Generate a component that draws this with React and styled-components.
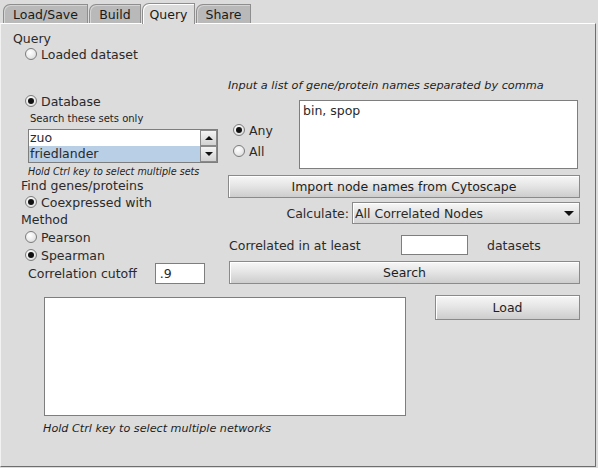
import React from 'react';
import styled, { createGlobalStyle } from 'styled-components';

const Global = createGlobalStyle`
  html, body { margin: 0; padding: 0; background: #dcdcdc; }
  body { font-family: "DejaVu Sans", "Liberation Sans", sans-serif; font-size: 12px; color: #2a2a2a; }
  * { box-sizing: border-box; }
`;

const Window = styled.div`
  width: 598px;
  height: 468px;
  padding-top: 3px;
  display: flex;
  flex-direction: column;
  background: #dcdcdc;
  overflow: hidden;
`;

const TabBar = styled.div`
  display: flex;
  align-items: flex-end;
  height: 20px;
  padding-left: 3px;
`;

const Tab = styled.div`
  width: ${p => p.$w}px;
  height: ${p => (p.$active ? 21 : 19)}px;
  margin-bottom: ${p => (p.$active ? -1 : 0)}px;
  margin-right: 1px;
  display: flex;
  align-items: center;
  justify-content: center;
  font-size: 12.5px;
  color: #1a1a1a;
  border: 1px solid #8e8e8e;
  border-bottom: none;
  border-top-left-radius: 7px;
  background: ${p => (p.$active ? '#dcdcdc' : '#b9b9b9')};
  box-shadow: inset 1px 1px 0 ${p => (p.$active ? '#ffffff' : '#d4d4d4')};
  position: relative;
  z-index: ${p => (p.$active ? 2 : 0)};
`;

const Panel = styled.div`
  flex: 1;
  margin-right: 2px;
  margin-bottom: 1px;
  border-top: 1px solid #ffffff;
  border-left: 1px solid #f2f2f2;
  border-right: 1px solid #6e6e6e;
  border-bottom: 1px solid #6e6e6e;
  padding: 7px 0 0 12px;
  display: flex;
  flex-direction: column;
`;

const TopGrid = styled.div`
  display: grid;
  grid-template-columns: 207px 352px;
  column-gap: 8px;
  align-items: start;
`;

const Column = styled.div`
  display: flex;
  flex-direction: column;
  padding-top: ${p => p.$pt || 0}px;
`;

const Label = styled.div`
  height: ${p => p.$h || 16}px;
  line-height: ${p => p.$h || 16}px;
  margin-top: ${p => p.$mt || 0}px;
  padding-left: ${p => p.$indent || 0}px;
  font-size: 12.5px;
  white-space: nowrap;
`;

const Hint = styled.div`
  height: ${p => p.$h || 14}px;
  line-height: ${p => p.$h || 14}px;
  margin-top: ${p => p.$mt || 0}px;
  padding-left: ${p => p.$indent || 0}px;
  font-size: ${p => p.$size || 11}px;
  font-style: ${p => (p.$italic ? 'italic' : 'normal')};
  white-space: nowrap;
  color: #1e1e1e;
`;

const RadioRow = styled.div`
  display: flex;
  align-items: center;
  gap: 4px;
  height: ${p => p.$h || 16}px;
  margin-top: ${p => p.$mt || 0}px;
  padding-left: ${p => (p.$indent === undefined ? 12 : p.$indent)}px;
  font-size: 12.5px;
  white-space: nowrap;
`;

const RadioCircle = styled.span`
  width: 12px;
  height: 12px;
  flex: none;
  border-radius: 50%;
  border: 1px solid #7c7c7c;
  background: radial-gradient(circle at 40% 35%, #ffffff 0%, #ececec 50%, #cfcfcf 100%);
  display: inline-flex;
  align-items: center;
  justify-content: center;
  &::after {
    content: '';
    width: 6px;
    height: 6px;
    border-radius: 50%;
    background: #101010;
    display: ${p => (p.$checked ? 'block' : 'none')};
  }
`;

const Radio = ({ checked, children, ...rest }) => (
  <RadioRow {...rest}>
    <RadioCircle $checked={checked} />
    <span>{children}</span>
  </RadioRow>
);

const SetList = styled.div`
  margin-top: ${p => p.$mt || 0}px;
  margin-left: 15px;
  width: 190px;
  height: 34px;
  border: 1px solid #7e7e7e;
  background: #fff;
  display: flex;
`;

const SetItems = styled.div`
  flex: 1;
  display: flex;
  flex-direction: column;
`;

const SetItem = styled.div`
  height: 16px;
  line-height: 16px;
  padding-left: 1px;
  font-size: 12.5px;
  background: ${p => (p.$selected ? '#b8cfe5' : '#ffffff')};
`;

const ScrollCol = styled.div`
  width: 17px;
  display: flex;
  flex-direction: column;
`;

const ScrollButton = styled.div`
  flex: 1;
  border: 1px solid #8a8a8a;
  background: linear-gradient(#f4f4f4, #d2d2d2);
  display: flex;
  align-items: center;
  justify-content: center;
  &::after {
    content: '';
    width: 0;
    height: 0;
    border-left: 4px solid transparent;
    border-right: 4px solid transparent;
    ${p => (p.$up ? 'border-bottom: 4px solid #111;' : 'border-top: 4px solid #111;')}
  }
`;

const CutoffRow = styled.div`
  display: flex;
  align-items: center;
  height: 21px;
  margin-top: ${p => p.$mt || 0}px;
  padding-left: 15px;
  font-size: 12.5px;
`;

const TextField = styled.div`
  width: ${p => p.$w}px;
  height: ${p => p.$h}px;
  margin-left: ${p => p.$ml || 0}px;
  border: 1px solid #7e7e7e;
  background: #fff;
  padding-left: 4px;
  line-height: ${p => p.$h - 2}px;
  font-size: 12.5px;
`;

const InputRow = styled.div`
  display: flex;
  margin-top: ${p => p.$mt || 0}px;
`;

const AnyAllGroup = styled.div`
  width: 71px;
  padding-top: 22px;
  display: flex;
  flex-direction: column;
`;

const NamesBox = styled.div`
  width: 279px;
  height: 69px;
  border: 1px solid #7e7e7e;
  background: #fff;
  padding: 2px 3px;
  font-size: 12.5px;
  line-height: 16px;
`;

const Button = styled.div`
  width: ${p => p.$w}px;
  height: ${p => p.$h || 23}px;
  margin-top: ${p => p.$mt || 0}px;
  margin-left: ${p => p.$ml || 0}px;
  border: 1px solid #8a8a8a;
  background: linear-gradient(#f7f7f7, #e6e6e6 45%, #cdcdcd);
  box-shadow: inset 1px 1px 0 #ffffff;
  display: flex;
  align-items: center;
  justify-content: center;
  font-size: 12.5px;
  color: #1e1e1e;
  flex: none;
`;

const CalcRow = styled.div`
  display: flex;
  align-items: center;
  justify-content: flex-end;
  gap: 3px;
  height: 22px;
  margin-top: ${p => p.$mt || 0}px;
  font-size: 12.5px;
`;

const Combo = styled.div`
  width: 228px;
  height: 22px;
  border: 1px solid #8a8a8a;
  background: linear-gradient(#f7f7f7, #e4e4e4 50%, #d4d4d4);
  box-shadow: inset 1px 1px 0 #ffffff;
  display: flex;
  align-items: center;
  justify-content: space-between;
  padding: 0 5px 0 2px;
  &::after {
    content: '';
    border-left: 5px solid transparent;
    border-right: 5px solid transparent;
    border-top: 5px solid #111;
  }
`;

const CorrRow = styled.div`
  display: flex;
  align-items: center;
  height: 20px;
  margin-top: ${p => p.$mt || 0}px;
  padding-left: 1px;
  font-size: 12.5px;
`;

const CorrText = styled.span`
  width: ${p => p.$w || 'auto'};
  margin-left: ${p => p.$ml || 0}px;
`;

const BottomRow = styled.div`
  display: flex;
  align-items: flex-start;
  margin-top: 11px;
  padding-left: 31px;
`;

const NetworkList = styled.div`
  width: 362px;
  height: 119px;
  margin-top: 2px;
  border: 1px solid #7e7e7e;
  background: #fff;
`;

export default function App() {
  return (
    <>
      <Global />
      <Window>
        <TabBar>
          <Tab $w={85}>Load/Save</Tab>
          <Tab $w={52}>Build</Tab>
          <Tab $w={53} $active>Query</Tab>
          <Tab $w={55}>Share</Tab>
        </TabBar>
        <Panel>
          <TopGrid>
            <Column>
              <Label>Query</Label>
              <Radio $h={14}>Loaded dataset</Radio>
              <Radio checked $mt={32}>Database</Radio>
              <Hint $mt={3} $indent={17} $size={10}>Search these sets only</Hint>
              <SetList $mt={3}>
                <SetItems>
                  <SetItem>zuo</SetItem>
                  <SetItem $selected>friedlander</SetItem>
                </SetItems>
                <ScrollCol>
                  <ScrollButton $up />
                  <ScrollButton />
                </ScrollCol>
              </SetList>
              <Hint $mt={2} $indent={15} $size={9.6} $italic>Hold Ctrl key to select multiple sets</Hint>
              <Label $h={14} $indent={8}>Find genes/proteins</Label>
              <Radio checked $mt={1}>Coexpressed with</Radio>
              <Label $mt={2} $indent={8}>Method</Label>
              <Radio $mt={1}>Pearson</Radio>
              <Radio checked $mt={2}>Spearman</Radio>
              <CutoffRow>
                <span>Correlation cutoff</span>
                <TextField $w={50} $h={21} $ml={18}>.9</TextField>
              </CutoffRow>
            </Column>
            <Column $pt={48}>
              <Hint $italic $size={11.3}>Input a list of gene/protein names separated by comma</Hint>
              <InputRow $mt={7}>
                <AnyAllGroup>
                  <Radio checked $indent={5}>Any</Radio>
                  <Radio $indent={5} $mt={5}>All</Radio>
                </AnyAllGroup>
                <NamesBox>bin, spop</NamesBox>
              </InputRow>
              <Button $w={352} $mt={6}>Import node names from Cytoscape</Button>
              <CalcRow $mt={4}>
                <span>Calculate:</span>
                <Combo>All Correlated Nodes</Combo>
              </CalcRow>
              <CorrRow $mt={11}>
                <CorrText $w="172px">Correlated in at least</CorrText>
                <TextField $w={67} $h={20} />
                <CorrText $ml={19}>datasets</CorrText>
              </CorrRow>
              <Button $w={351} $ml={1} $mt={6}>Search</Button>
            </Column>
          </TopGrid>
          <BottomRow>
            <NetworkList />
            <Button $w={145} $h={25} $ml={29}>Load</Button>
          </BottomRow>
          <Hint $mt={6} $indent={30} $size={11.2} $italic>Hold Ctrl key to select multiple networks</Hint>
        </Panel>
      </Window>
    </>
  );
}
